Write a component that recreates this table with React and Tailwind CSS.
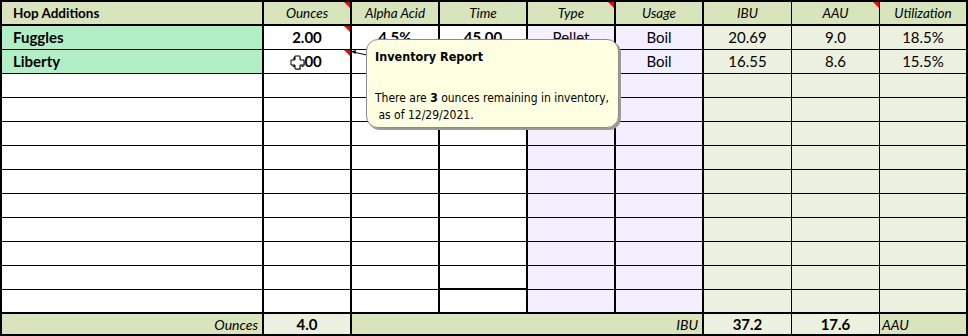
import React from 'react';

const rows = [
  { name: 'Fuggles', oz: '2.00', aa: '4.5%', time: '45.00', type: 'Pellet', usage: 'Boil', ibu: '20.69', aau: '9.0', util: '18.5%' },
  { name: 'Liberty', oz: '2.00', aa: '4.3%', time: '45.00', type: 'Pellet', usage: 'Boil', ibu: '16.55', aau: '8.6', util: '15.5%' },
  ...Array.from({ length: 10 }, () => ({})),
];

const headers = ['Ounces', 'Alpha Acid', 'Time', 'Type', 'Usage', 'IBU', 'AAU', 'Utilization'];

function Flag() {
  return (
    <span className="absolute top-0 right-0 w-0 h-0 border-l-[6px] border-l-transparent border-t-[6px] border-t-[#ff0000]" />
  );
}

function Cell({ className = '', children, flag }) {
  return (
    <div className={`relative flex items-center border-black overflow-hidden ${className}`}>
      {children}
      {flag && <Flag />}
    </div>
  );
}

export default function App() {
  return (
    <div className="relative w-[968px] h-[336px] bg-white font-[family-name:Lato,sans-serif] text-black">
      <div className="grid grid-cols-[262px_repeat(8,88px)] grid-rows-[24px_repeat(12,24px)_22px] border-l-2 border-t-2 border-black">
        {/* header */}
        <Cell className="bg-[#d8e4bc] border-r-2 border-b-2 pl-[11px] pt-[1px] text-[13.5px] font-bold">Hop Additions</Cell>
        {headers.map((h, i) => (
          <Cell
            key={h}
            flag={h === 'Ounces' || h === 'Type' || h === 'AAU'}
            className={`bg-[#d8e4bc] border-b-2 pt-[1px] justify-center italic text-[13.5px] ${i === 5 || i === 6 ? 'border-r' : 'border-r-2'}`}
          >
            {h}
          </Cell>
        ))}

        {/* data rows */}
        {rows.map((r, i) => {
          const last = i === rows.length - 1;
          const bb = last ? 'border-b-2' : 'border-b';
          return (
            <React.Fragment key={i}>
              <Cell className={`${r.name ? 'bg-[#b2efc6]' : 'bg-white'} border-r-2 ${bb} pl-[11px] text-[15px] font-bold`}>{r.name}</Cell>
              <Cell flag={i < 2} className={`bg-white border-r-2 ${bb} justify-center text-[15px] font-bold`}>{r.oz}</Cell>
              <Cell className={`bg-white border-r-2 ${bb} justify-center text-[15px] font-bold`}>{r.aa}</Cell>
              <Cell className={`bg-white border-r-2 ${i === 10 ? 'border-b-2' : bb} justify-center text-[15px] font-bold`}>{r.time}</Cell>
              <Cell className={`bg-[#f3effe] border-r-2 ${bb} justify-center text-[15px]`}>{r.type}</Cell>
              <Cell className={`bg-[#f3effe] border-r-2 ${bb} justify-center text-[15px]`}>{r.usage}</Cell>
              <Cell className={`bg-[#ebf1de] border-r ${bb} justify-center text-[15px]`}>{r.ibu}</Cell>
              <Cell className={`bg-[#ebf1de] border-r ${bb} justify-center text-[15px]`}>{r.aau}</Cell>
              <Cell className={`bg-[#ebf1de] border-r-2 ${bb} justify-center text-[15px]`}>{r.util}</Cell>
            </React.Fragment>
          );
        })}

        {/* totals */}
        <Cell className="bg-[#d8e4bc] border-r-2 border-b-2 justify-end pr-[4px] italic text-[14px]">Ounces</Cell>
        <Cell className="bg-[#ebf1de] border-r-2 border-b-2 justify-center font-bold text-[15px]">4.0</Cell>
        <Cell className="col-span-4 bg-[#d8e4bc] border-r-2 border-b-2 justify-end pr-[4px] italic text-[14px]">IBU</Cell>
        <Cell className="bg-[#ebf1de] border-r border-b-2 justify-center font-bold text-[15px]">37.2</Cell>
        <Cell className="bg-[#ebf1de] border-r border-b-2 justify-center font-bold text-[15px]">17.6</Cell>
        <Cell className="bg-[#d8e4bc] border-r-2 border-b-2 pl-[2px] italic text-[14px]">AAU</Cell>
      </div>

      {/* comment connector */}
      <svg className="absolute left-[350px] top-[47px]" width="18" height="12" viewBox="0 0 18 12">
        <line x1="3" y1="5" x2="17" y2="8" stroke="#000" strokeWidth="1" />
        <polygon points="1,4.5 6,3 5.5,7" fill="#000" />
      </svg>

      {/* comment box */}
      <div className="absolute left-[366px] top-[39px] w-[253px] h-[89px] rounded-[12px] bg-[#ffffe1] border border-[#8c8c8c] shadow-[2px_2px_0_#9a9a9a] pl-[8px] pt-[8px] font-[family-name:'DejaVu_Sans_Condensed','DejaVu_Sans',sans-serif] text-[12px] leading-[17px]">
        <div className="font-bold text-[12.5px]">Inventory Report</div>
        <div className="mt-[25px]">
          There are <b>3</b> ounces remaining in inventory,
          <br />
          &nbsp;as of 12/29/2021.
        </div>
      </div>

      {/* excel cursor */}
      <svg className="absolute left-[290px] top-[55px]" width="17" height="17" viewBox="0 0 17 17">
        <polygon points="6,2 11,2 11,6 15,6 15,11 11,11 11,15 6,15 6,11 2,11 2,6 6,6" fill="#9a9a9a" />
        <polygon points="5,1 10,1 10,5 14,5 14,10 10,10 10,14 5,14 5,10 1,10 1,5 5,5" fill="#fff" stroke="#000" strokeWidth="1" />
      </svg>
    </div>
  );
}
